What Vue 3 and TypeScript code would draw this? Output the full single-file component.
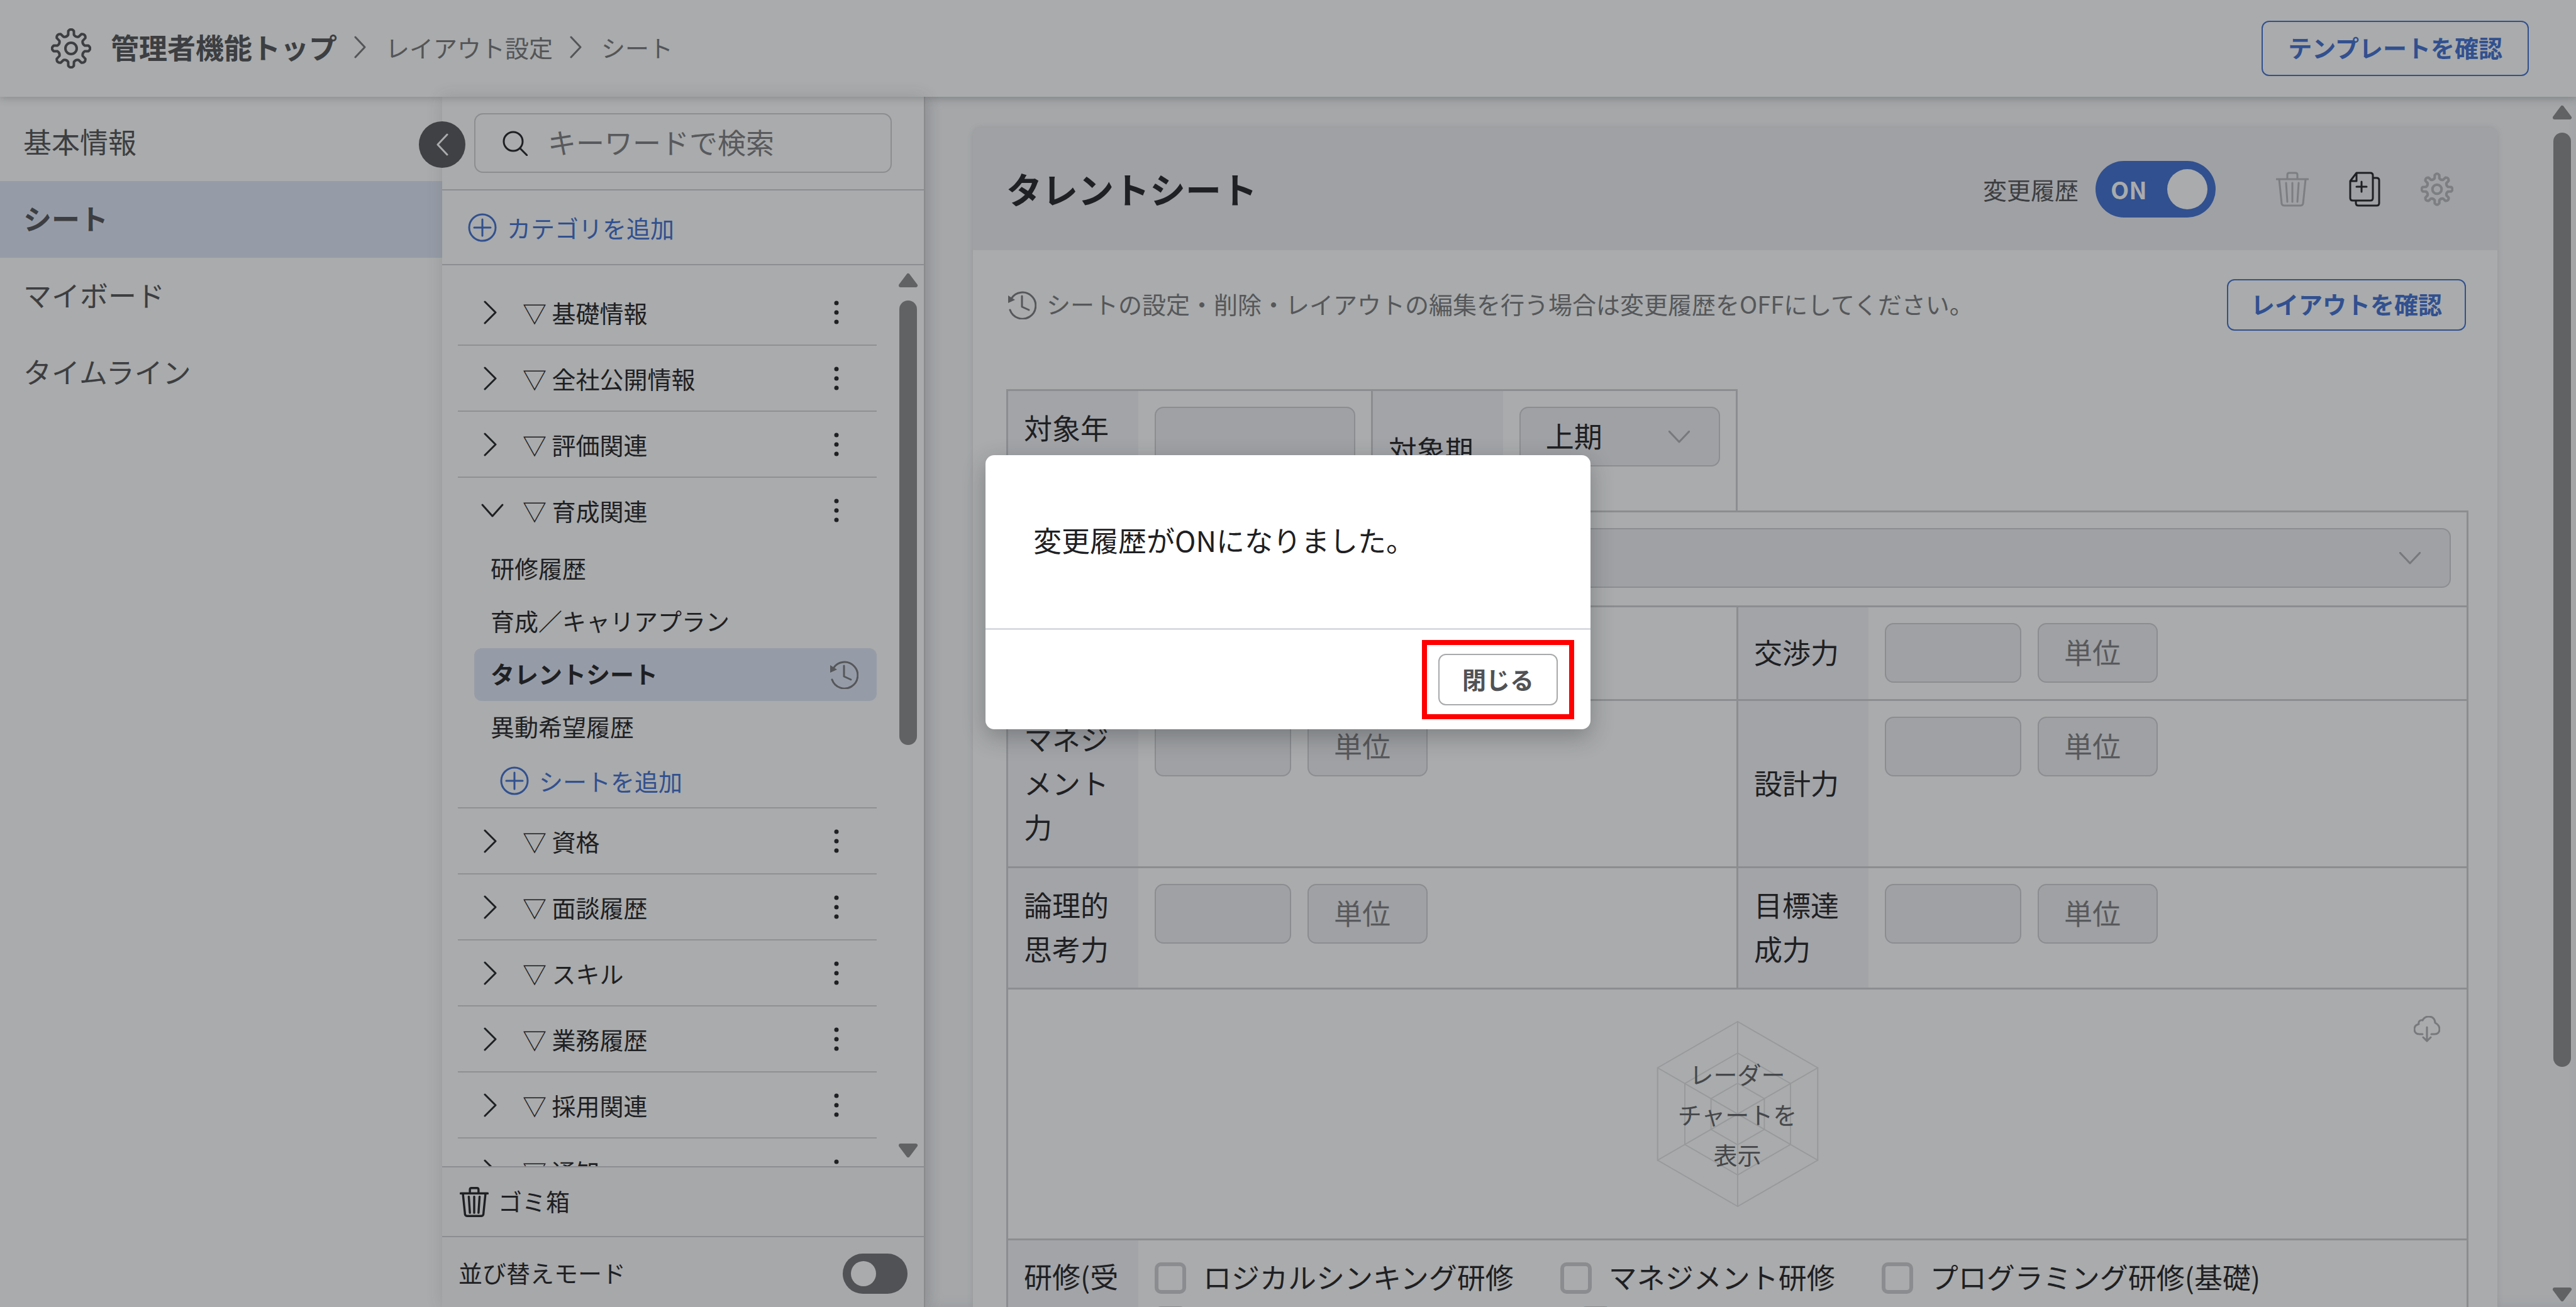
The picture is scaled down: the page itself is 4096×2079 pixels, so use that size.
<script setup lang="ts">
import { ref } from 'vue'

interface Category {
  name: string
  open?: boolean
  sheets?: string[]
}

const navItems = ['基本情報', 'シート', 'マイボード', 'タイムライン']
const activeNav = ref('シート')
const activeSheet = ref('タレントシート')
const historyOn = ref(true)
const sortMode = ref(false)
const dialogOpen = ref(true)
const keyword = ref('')

const categories = ref<Category[]>([
  { name: '基礎情報' },
  { name: '全社公開情報' },
  { name: '評価関連' },
  {
    name: '育成関連',
    open: true,
    sheets: ['研修履歴', '育成／キャリアプラン', 'タレントシート', '異動希望履歴'],
  },
  { name: '資格' },
  { name: '面談履歴' },
  { name: 'スキル' },
  { name: '業務履歴' },
  { name: '採用関連' },
  { name: '通知' },
])

const skillRows = [
  { height: 'row-single', fields: ['', '交渉力'] },
  { height: 'row-triple', fields: ['マネジメント力', '設計力'] },
  { height: 'row-double', fields: ['論理的思考力', '目標達成力'] },
]

const trainings = [
  ['ロジカルシンキング研修', 'マネジメント研修', 'プログラミング研修(基礎)'],
  ['プログラミング研修(応用)', 'その他'],
]

function point(r: number, deg: number, c: number): string {
  const a = (deg * Math.PI) / 180
  return `${(c + r * Math.sin(a)).toFixed(1)} ${(c - r * Math.cos(a)).toFixed(1)}`
}

// Eight rounded teeth joined by curved valleys, on a 64 unit square.
const gearPath = (() => {
  let d = ''
  for (let k = 0; k < 8; k++) {
    const a = k * 45
    d += `${k ? 'L' : 'M'}${point(22, a - 12, 32)}L${point(28, a - 9, 32)}`
    d += `Q${point(33, a, 32)} ${point(28, a + 9, 32)}L${point(22, a + 12, 32)}`
    d += `Q${point(19, a + 22, 32)} ${point(22, a + 33, 32)}`
  }
  return d + 'Z'
})()

const hexagon = (r: number) =>
  [0, 60, 120, 180, 240, 300].map((a) => point(r, a, 150).replace(' ', ',')).join(' ')
const rings = [147, 97, 49].map(hexagon)
const spokes = [0, 60, 120].map((a) => `M${point(147, a, 150)}L${point(147, a + 180, 150)}`).join('')
</script>

<template>
  <div class="app">
    <header class="topbar">
      <svg class="gear" viewBox="0 0 64 64"><path :d="gearPath" /><circle cx="32" cy="32" r="9" /></svg>
      <nav class="crumbs">
        <a href="#" class="crumb-top">管理者機能トップ</a>
        <svg class="crumb-sep" viewBox="0 0 20 36"><path d="M2 2L17 18L2 34" /></svg>
        <a href="#">レイアウト設定</a>
        <svg class="crumb-sep" viewBox="0 0 20 36"><path d="M2 2L17 18L2 34" /></svg>
        <span>シート</span>
      </nav>
      <button type="button" class="outline-btn top-btn">テンプレートを確認</button>
    </header>

    <div class="body">
      <nav class="side">
        <a
          v-for="item in navItems"
          :key="item"
          href="#"
          :class="{ active: item === activeNav }"
          @click.prevent="activeNav = item"
          >{{ item }}</a
        >
      </nav>

      <aside class="panel">
        <button type="button" class="collapse" aria-label="閉じる">
          <svg viewBox="0 0 20 36"><path d="M18 2L3 18L18 34" /></svg>
        </button>
        <div class="search-wrap">
          <div class="search">
            <svg viewBox="0 0 40 40"><circle cx="17" cy="17" r="15" /><path d="M28 28L39 39" /></svg>
            <input v-model="keyword" type="text" aria-label="キーワードで検索" placeholder="キーワードで検索" />
          </div>
        </div>
        <button type="button" class="add add-category">
          <svg viewBox="0 0 46 46"><circle cx="23" cy="23" r="21" /><path d="M23 10V36M10 23H36" /></svg>
          カテゴリを追加
        </button>

        <div class="tree-area">
          <ul class="tree">
            <li v-for="cat in categories" :key="cat.name">
              <div class="cat-row">
                <button type="button" class="icon-btn" :aria-label="cat.name" @click="cat.open = !cat.open">
                  <svg v-if="cat.open" viewBox="0 0 38 38"><path d="M3 10L19 28L35 10" /></svg>
                  <svg v-else viewBox="0 0 38 38"><path d="M7 2L24 19L7 36" /></svg>
                </button>
                <span class="cat-name">▽ {{ cat.name }}</span>
                <button type="button" class="icon-btn dots" aria-label="メニュー">
                  <svg viewBox="0 0 8 38">
                    <circle cx="4" cy="4" r="3.5" /><circle cx="4" cy="19" r="3.5" /><circle cx="4" cy="34" r="3.5" />
                  </svg>
                </button>
              </div>
              <template v-if="cat.open && cat.sheets">
                <a
                  v-for="sheet in cat.sheets"
                  :key="sheet"
                  href="#"
                  class="sheet"
                  :class="{ active: sheet === activeSheet }"
                  @click.prevent="activeSheet = sheet"
                >
                  <span>{{ sheet }}</span>
                  <svg v-if="sheet === activeSheet" class="history" viewBox="0 0 46 46">
                    <path d="M4 31A21 21 0 1 0 6 13" /><path d="M23 9V26L34 31" />
                    <path class="head" d="M1 8V20L12 15Z" />
                  </svg>
                </a>
                <button type="button" class="add add-sheet">
                  <svg viewBox="0 0 46 46"><circle cx="23" cy="23" r="21" /><path d="M23 10V36M10 23H36" /></svg>
                  シートを追加
                </button>
              </template>
            </li>
          </ul>
          <div class="scroll scroll-tree">
            <svg viewBox="0 0 32 24"><path d="M16 4L28 20H4Z" /></svg>
            <span class="thumb"></span>
            <span class="rest"></span>
            <svg viewBox="0 0 32 24"><path d="M16 20L28 4H4Z" /></svg>
          </div>
        </div>

        <button type="button" class="trash-row">
          <svg class="trash" viewBox="0 0 52 56">
            <path d="M1 12H51M18 12V5Q18 2 21 2H31Q34 2 34 5V12M5 12L9 51Q10 54 13 54H39Q42 54 43 51L47 12M16 18L18 48M26 18V48M36 18L34 48" />
          </svg>
          <span>ゴミ箱</span>
        </button>
        <label class="sort-row">
          <span>並び替えモード</span>
          <span class="switch small">
            <input v-model="sortMode" type="checkbox" />
            <span class="knob"></span>
          </span>
        </label>
      </aside>

      <main class="main">
        <section class="card">
          <div class="card-head">
            <h1>タレントシート</h1>
            <label class="history-toggle">
              変更履歴
              <span class="switch big" :class="{ on: historyOn }">
                <input v-model="historyOn" type="checkbox" />
                <span>ON</span>
                <span class="knob"></span>
              </span>
            </label>
            <button type="button" class="icon-btn head-icon muted" aria-label="削除">
              <svg class="trash" viewBox="0 0 52 56">
                <path d="M1 12H51M18 12V5Q18 2 21 2H31Q34 2 34 5V12M5 12L9 51Q10 54 13 54H39Q42 54 43 51L47 12M16 18L18 48M26 18V48M36 18L34 48" />
              </svg>
            </button>
            <button type="button" class="icon-btn head-icon" aria-label="複製">
              <svg class="copy" viewBox="0 0 52 56">
                <path d="M13 2H35Q39 2 39 6V42Q39 46 35 46H7Q3 46 3 42V15ZM13 3V15H4" />
                <path d="M40 10H45Q49 10 49 14V50Q49 54 45 54H16Q12 54 12 50V47" />
                <path d="M21 16V32M13 24H29" />
              </svg>
            </button>
            <button type="button" class="icon-btn head-icon muted" aria-label="設定">
              <svg class="gear" viewBox="0 0 64 64"><path :d="gearPath" /><circle cx="32" cy="32" r="9" /></svg>
            </button>
          </div>

          <div class="notice">
            <svg class="history" viewBox="0 0 46 46">
              <path d="M4 31A21 21 0 1 0 6 13" /><path d="M23 9V26L34 31" />
              <path class="head" d="M1 8V20L12 15Z" />
            </svg>
            <p>シートの設定・削除・レイアウトの編集を行う場合は変更履歴をOFFにしてください。</p>
            <button type="button" class="outline-btn">レイアウトを確認</button>
          </div>

          <form class="sheet-form">
            <div class="row row-half row-double">
              <div class="field">
                <label for="year">対象年度</label>
                <div class="content"><input id="year" type="text" class="box grow" disabled /></div>
              </div>
              <div class="field">
                <label for="term">対象期</label>
                <div class="content">
                  <span class="select grow">
                    <select id="term" class="box" disabled><option>上期</option></select>
                    <svg viewBox="0 0 34 20"><path d="M1 1L17 18L33 1" /></svg>
                  </span>
                </div>
              </div>
            </div>
            <div class="row row-select">
              <div class="field">
                <label for="grade"></label>
                <div class="content">
                  <span class="select grow">
                    <select id="grade" class="box" disabled><option></option></select>
                    <svg viewBox="0 0 34 20"><path d="M1 1L17 18L33 1" /></svg>
                  </span>
                </div>
              </div>
            </div>
            <div v-for="row in skillRows" :key="row.height" class="row" :class="row.height">
              <div v-for="(name, i) in row.fields" :key="i" class="field">
                <label :for="row.height + i">{{ name }}</label>
                <div class="content">
                  <input :id="row.height + i" type="text" class="box value" disabled />
                  <input
                    v-if="name"
                    type="text"
                    class="box unit"
                    placeholder="単位"
                    :aria-label="name + '単位'"
                    disabled
                  />
                </div>
              </div>
            </div>
            <div class="row">
              <div class="field radar">
                <svg class="web" viewBox="0 0 300 300">
                  <polygon v-for="ring in rings" :key="ring" :points="ring" /><path :d="spokes" />
                </svg>
                <p>レーダー<br />チャートを<br />表示</p>
                <button type="button" class="icon-btn cloud" aria-label="ダウンロード">
                  <svg viewBox="0 0 42 42">
                    <path d="M14 29H9C4 29 1 26 1 21C1 17 4 14 8 13C7 9 10 6 14 7C16 3 19 1 24 1C30 1 34 5 34 11C38 13 41 16 41 21C41 26 38 29 33 29H28M21 18V40M15 34L21 40L27 34" />
                  </svg>
                </button>
              </div>
            </div>
            <div class="row row-checks">
              <div class="field">
                <span class="label">研修(受講)</span>
                <div class="content checks">
                  <div v-for="(line, i) in trainings" :key="i" class="check-line">
                    <label v-for="t in line" :key="t"><input type="checkbox" disabled /><span>{{ t }}</span></label>
                  </div>
                </div>
              </div>
            </div>
          </form>
        </section>
        <div class="scroll scroll-main">
          <svg viewBox="0 0 32 24"><path d="M16 4L28 20H4Z" /></svg>
          <span class="thumb"></span>
          <span class="rest"></span>
          <svg viewBox="0 0 32 24"><path d="M16 20L28 4H4Z" /></svg>
        </div>
      </main>
    </div>

    <div v-if="dialogOpen" class="backdrop">
      <div class="dialog" role="dialog" aria-modal="true">
        <p>変更履歴がONになりました。</p>
        <div class="dialog-foot">
          <div class="marker">
            <button type="button" @click="dialogOpen = false">閉じる</button>
          </div>
        </div>
      </div>
    </div>
  </div>
</template>

<style>
body {
  margin: 0;
  overflow: hidden;
}
</style>

<style scoped>
* {
  box-sizing: border-box;
}
.app {
  height: 100vh;
  display: flex;
  flex-direction: column;
  position: relative;
  overflow: hidden;
  background: #a9abac;
  color: #1e2023;
  font-family: 'Noto Sans CJK JP', 'Noto Sans', sans-serif;
  font-size: 38px;
  line-height: 56px;
}
button,
input,
select {
  font: inherit;
  color: inherit;
  margin: 0;
}
button {
  background: none;
  border: 0;
  padding: 0;
  cursor: pointer;
}
a {
  color: inherit;
  text-decoration: none;
}
p,
h1,
ul {
  margin: 0;
  padding: 0;
}
svg {
  display: block;
  flex: none;
  fill: none;
  stroke: currentColor;
  stroke-width: 3;
  stroke-linecap: round;
  stroke-linejoin: round;
}

.topbar {
  flex: none;
  height: 154px;
  display: flex;
  align-items: center;
  padding: 0 75px 0 81px;
  color: #3c3e41;
  box-shadow: 0 2px 12px rgba(60, 62, 66, 0.3);
  position: relative;
  z-index: 2;
}
.gear {
  width: 64px;
  height: 64px;
  stroke-width: 4;
}
.crumbs {
  display: flex;
  align-items: center;
  flex: 1;
  margin-left: 31px;
  padding-bottom: 4px;
  color: #535558;
}
.crumb-top {
  font-size: 45px;
  font-weight: 700;
  color: #3c3e41;
}
.crumb-sep {
  width: 20px;
  height: 36px;
  margin: 0 30px 0 27px;
}
.outline-btn {
  height: 82px;
  padding: 0 36px 4px;
  border: 2px solid #31508f;
  border-radius: 12px;
  color: #31508f;
  font-weight: 700;
}
.top-btn {
  height: 88px;
  padding: 0 40px 4px;
}

.body {
  flex: 1;
  min-height: 0;
  display: flex;
}
.side {
  flex: none;
  width: 703px;
  padding-top: 12px;
  display: flex;
  flex-direction: column;
  font-size: 45px;
  color: #3c3e41;
}
.side a {
  height: 122px;
  line-height: 118px;
  padding-left: 37px;
}
.side .active {
  background: #969ca7;
  font-weight: 700;
}

.panel {
  flex: none;
  width: 768px;
  position: relative;
  display: flex;
  flex-direction: column;
  border-right: 2px solid #898b8d;
  background: #a9abac;
  box-shadow: 0 0 24px rgba(60, 62, 66, 0.16);
}
.collapse {
  position: absolute;
  left: -37px;
  top: 39px;
  width: 74px;
  height: 74px;
  border-radius: 50%;
  background: #3f4144;
  color: #a9abac;
  display: flex;
  align-items: center;
  justify-content: center;
}
.collapse svg {
  width: 20px;
  height: 36px;
}
.search-wrap {
  padding: 26px 51px 26px 51px;
  border-bottom: 2px solid #8b8d90;
}
.search {
  height: 95px;
  display: flex;
  align-items: center;
  border: 2px solid #8b8d90;
  border-radius: 14px;
  padding-left: 43px;
}
.search svg {
  width: 40px;
  height: 40px;
}
.search input {
  flex: 1;
  min-width: 0;
  margin-left: 32px;
  border: 0;
  outline: 0;
  padding: 0 0 4px;
  background: none;
  font-size: 45px;
}
input::placeholder {
  color: #58595c;
  opacity: 1;
}
.add {
  display: flex;
  align-items: center;
  gap: 16px;
  color: #31508f;
}
.add svg {
  width: 46px;
  height: 46px;
}
.add-category {
  height: 119px;
  flex: none;
  padding-left: 41px;
  border-bottom: 2px solid #8b8d90;
}
.tree-area {
  flex: 1;
  min-height: 0;
  display: flex;
}
.tree {
  flex: 1;
  overflow: hidden;
  list-style: none;
  padding: 23px 33px 0 25px;
}
.tree li {
  border-bottom: 2px solid #8e9092;
}
.cat-row {
  height: 103px;
  display: flex;
  align-items: center;
  padding: 0 60px 0 36px;
}
.icon-btn svg {
  width: 38px;
  height: 38px;
}
.cat-name {
  flex: 1;
  margin-left: 29px;
}
.icon-btn.dots svg {
  width: 8px;
  fill: currentColor;
  stroke: none;
}
.sheet {
  height: 84px;
  display: flex;
  align-items: center;
  justify-content: space-between;
  margin-left: 26px;
  padding: 0 29px 0 26px;
  border-radius: 12px;
}
.sheet span,
.trash-row span,
.sort-row > span:first-child {
  padding-bottom: 4px;
}
.sheet.active {
  background: #969ca7;
  font-weight: 700;
}
.history {
  width: 46px;
  height: 46px;
  color: #55575a;
}
.history .head {
  fill: currentColor;
  stroke: none;
}
.add-sheet {
  height: 85px;
  padding-left: 67px;
}
.scroll {
  flex: none;
  display: flex;
  flex-direction: column;
  align-items: center;
  color: #606264;
}
.scroll svg {
  width: 32px;
  height: 24px;
  fill: currentColor;
  stroke-width: 6;
}
.thumb {
  width: 28px;
  margin-top: 20px;
  border-radius: 14px;
  background: #606264;
}
.scroll-tree {
  width: 42px;
  padding: 12px 9px 13px 0;
}
.scroll-tree .thumb {
  flex: 707 1 0;
}
.scroll-tree .rest {
  flex: 633 1 0;
}
.trash-row,
.sort-row {
  flex: none;
  display: flex;
  align-items: center;
  height: 111px;
  border-top: 2px solid #8b8d90;
  background: #a6a8aa;
}
.trash-row {
  gap: 15px;
  padding-left: 28px;
}
.trash {
  width: 52px;
  height: 56px;
}
.trash-row .trash {
  width: 46px;
  height: 48px;
  stroke-width: 4;
}
.sort-row {
  height: 113px;
  justify-content: space-between;
  padding: 4px 26px 0 26px;
}
.switch {
  display: flex;
  align-items: center;
  position: relative;
  background: #505255;
}
.switch input {
  position: absolute;
  inset: 0;
  width: 100%;
  height: 100%;
  opacity: 0;
}
.knob {
  border-radius: 50%;
  background: #a9abac;
}
.switch.small {
  width: 103px;
  height: 64px;
  border-radius: 32px;
  padding: 0 13px;
}
.switch.small .knob {
  width: 40px;
  height: 40px;
}
.switch.big {
  width: 191px;
  height: 90px;
  border-radius: 45px;
  padding: 0 13px 0 24px;
  justify-content: space-between;
  color: #a9abac;
  font-weight: 700;
}
.switch.big.on {
  background: #31508f;
}
.switch.big .knob {
  width: 64px;
  height: 64px;
}

.main {
  flex: 1;
  min-width: 0;
  display: flex;
  background: #a5a7a9;
  box-shadow: inset 8px 0 18px rgba(120, 122, 126, 0.25);
}
.card {
  flex: 1;
  min-width: 0;
  margin: 49px 80px 0 76px;
  border-radius: 14px 14px 0 0;
  background: #a9abac;
  box-shadow: 0 0 8px rgba(100, 102, 106, 0.25);
}
.card-head {
  height: 195px;
  display: flex;
  align-items: center;
  padding: 0 70px 0 53px;
  border-radius: 14px 14px 0 0;
  background: #9fa1a5;
}
h1 {
  flex: 1;
  padding-bottom: 4px;
  font-size: 57px;
  line-height: 84px;
  font-weight: 700;
}
.history-toggle {
  display: flex;
  align-items: center;
  gap: 27px;
  margin-right: 33px;
  color: #3c3e41;
}
.head-icon {
  margin-left: 63px;
}
.head-icon svg {
  width: 52px;
  height: 56px;
}
.head-icon .gear {
  stroke-width: 5;
}
.muted {
  color: #7c7e81;
}
.notice {
  display: flex;
  align-items: center;
  padding: 46px 50px 0 55px;
  color: #55575a;
}
.notice p {
  flex: 1;
  margin-left: 16px;
  padding-bottom: 4px;
}

.sheet-form {
  margin: 93px 46px 0 53px;
  font-size: 45px;
  line-height: 70px;
}
.row {
  display: flex;
  border-top: 3px solid #8b8d90;
  border-right: 3px solid #8b8d90;
}
.row-half {
  width: 50%;
}
.row-single {
  min-height: 149px;
}
.row-double {
  min-height: 193px;
}
.row-triple {
  min-height: 266px;
}
.row-select {
  min-height: 151px;
}
.row-checks {
  min-height: 266px;
}
.field {
  flex: 1;
  min-width: 0;
  display: flex;
  border-left: 3px solid #8b8d90;
}
.field > label,
.field > .label {
  flex: none;
  width: 207px;
  display: flex;
  align-items: center;
  padding: 0 25px 4px;
  background: #a2a4a8;
  overflow-wrap: anywhere;
}
.field > .label {
  align-items: flex-start;
  padding-top: 22px;
}
.content {
  flex: 1;
  min-width: 0;
  display: flex;
  align-items: flex-start;
  gap: 26px;
  padding: 25px 25px 24px 26px;
}
.box {
  height: 95px;
  border: 2px solid #8b8d90;
  border-radius: 14px;
  background: #9fa1a4;
  padding: 0 40px 4px;
  opacity: 1;
  color: #1e2023;
}
.grow {
  flex: 1;
  min-width: 0;
}
.value {
  width: 217px;
}
.unit {
  width: 191px;
}
.select {
  position: relative;
}
.select .box {
  width: 100%;
  appearance: none;
}
.select svg {
  position: absolute;
  right: 48px;
  top: 38px;
  width: 34px;
  height: 20px;
  color: #77797c;
}
.radar {
  position: relative;
  height: 396px;
  align-items: center;
  justify-content: center;
}
.web {
  position: absolute;
  width: 300px;
  height: 300px;
  stroke-width: 2;
  color: #97999b;
}
.radar p {
  position: relative;
  text-align: center;
  font-size: 38px;
  line-height: 64px;
  color: #45474a;
}
.cloud {
  position: absolute;
  right: 42px;
  top: 42px;
  color: #77797c;
}
.cloud svg {
  width: 42px;
  height: 42px;
}
.checks {
  flex-direction: column;
  gap: 0;
}
.check-line {
  display: flex;
  gap: 74px;
}
.check-line label {
  display: flex;
  align-items: center;
  height: 70px;
  gap: 27px;
  white-space: nowrap;
}
.check-line span {
  padding-bottom: 4px;
}
.check-line input {
  appearance: none;
  width: 50px;
  height: 50px;
  border: 6px solid #8a8c8f;
  border-radius: 10px;
}
.scroll-main {
  width: 45px;
  padding: 13px 0 8px;
}
.scroll-main .thumb {
  flex: 1486 1 0;
}
.scroll-main .rest {
  flex: 350 1 0;
}

.backdrop {
  position: absolute;
  inset: 0;
  z-index: 3;
  display: flex;
  justify-content: center;
  align-items: flex-start;
  padding-top: 724px;
}
.dialog {
  width: 962px;
  border-radius: 14px;
  background: #fff;
  box-shadow: 0 12px 36px rgba(30, 32, 36, 0.3);
}
.dialog p {
  padding: 100px 76px 105px;
  font-size: 45px;
  line-height: 70px;
}
.dialog-foot {
  display: flex;
  justify-content: flex-end;
  padding: 16px 26px;
  border-top: 3px solid #d9dbe2;
}
.marker {
  padding: 14px 18px;
  border: 8px solid #f00;
}
.marker button {
  display: block;
  width: 190px;
  height: 82px;
  padding-bottom: 2px;
  border: 2px solid #a8a9ab;
  border-radius: 12px;
  color: #505255;
  font-weight: 700;
}
</style>
